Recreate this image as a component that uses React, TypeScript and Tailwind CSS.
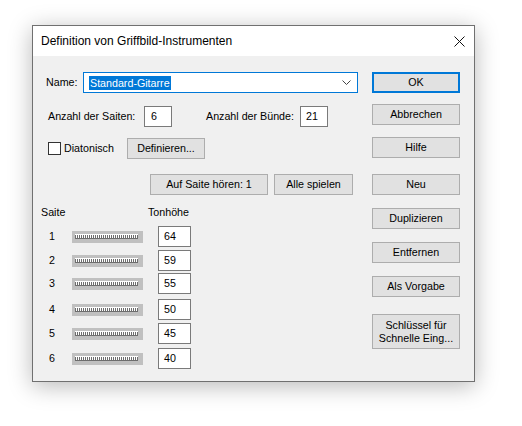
import React from "react";

const strings = [
  { n: 1, pitch: "64", gap: "mt-[7px]" },
  { n: 2, pitch: "59", gap: "mt-[3px]" },
  { n: 3, pitch: "55", gap: "mt-[2px]" },
  { n: 4, pitch: "50", gap: "mt-[5px]" },
  { n: 5, pitch: "45", gap: "mt-[3px]" },
  { n: 6, pitch: "40", gap: "mt-[4px]" },
];

function Btn({ children, className = "" }: { children: React.ReactNode; className?: string }) {
  return (
    <div
      className={`flex h-[21px] items-center justify-center border border-[#adadad] bg-[#e1e1e1] leading-[13px] ${className}`}
    >
      {children}
    </div>
  );
}

function Slider() {
  return (
    <div className="flex h-[12px] w-[71px] items-center bg-[#c0c0c0] px-[3px]">
      <svg width="63" height="5" viewBox="0 0 63 5" className="block">
        <defs>
          <pattern id="ticks" width="2" height="3" patternUnits="userSpaceOnUse">
            <rect width="2" height="3" fill="#ffffff" />
            <rect width="1" height="3" fill="#6d6d6d" />
          </pattern>
        </defs>
        <rect x="0" y="0" width="63" height="1" fill="#ffffff" />
        <rect x="0" y="1" width="63" height="3" fill="url(#ticks)" />
        <rect x="0" y="4" width="63" height="1" fill="#6d6d6d" />
      </svg>
    </div>
  );
}

export default function App() {
  return (
    <div
      className="min-h-[426px] w-[522px] bg-white pl-[32px] pt-[25px] text-[10.7px] text-black"
      style={{ fontFamily: '"Liberation Sans", Arial, sans-serif' }}
    >
      <div className="flex h-[357px] w-[443px] flex-col border border-[#707070] bg-[#f0f0f0] shadow-[0_4px_22px_rgba(0,0,0,0.28)]">
        {/* Title bar */}
        <div className="flex h-[30px] items-center justify-between bg-white pl-[8px] pr-[8px]">
          <span className="text-[12px]">Definition von Griffbild-Instrumenten</span>
          <svg width="11" height="11" viewBox="0 0 11 11" className="mr-[1px]">
            <path d="M0.5 0.5 L10.5 10.5 M10.5 0.5 L0.5 10.5" stroke="#111" strokeWidth="1" />
          </svg>
        </div>

        <div className="flex flex-1">
          {/* Left area */}
          <div className="flex w-[339px] flex-col">
            <div className="mt-[16px] flex h-[21px] items-center pl-[13px]">
              <span className="w-[37px]">Name:</span>
              <div className="flex h-[21px] w-[275px] items-center justify-between border border-[#0078d7] bg-white pl-[5px] pr-[6px]">
                <span className="bg-[#0078d7] px-[1px] leading-[14px] text-white">Standard-Gitarre</span>
                <svg width="9" height="5" viewBox="0 0 9 5">
                  <path d="M0.5 0.5 L4.5 4.5 L8.5 0.5" fill="none" stroke="#444" strokeWidth="1" />
                </svg>
              </div>
            </div>

            <div className="mt-[13px] flex h-[21px] items-center pl-[15px]">
              <span className="w-[96px]">Anzahl der Saiten:</span>
              <div className="flex h-[21px] w-[28px] items-center border border-[#7a7a7a] bg-white pl-[6px]">6</div>
              <span className="ml-[34px] w-[94px]">Anzahl der Bünde:</span>
              <div className="flex h-[21px] w-[28px] items-center border border-[#7a7a7a] bg-white pl-[5px]">21</div>
            </div>

            <div className="mt-[11px] flex h-[21px] items-center pl-[15px]">
              <div className="flex w-[79px] items-center">
                <div className="h-[13px] w-[13px] border border-[#333] bg-white" />
                <span className="ml-[3px]">Diatonisch</span>
              </div>
              <Btn className="w-[78px]">Definieren...</Btn>
            </div>

            <div className="mt-[15px] flex h-[21px] items-center pl-[117px]">
              <Btn className="w-[118px]">Auf Saite hören: 1</Btn>
              <Btn className="ml-[6px] w-[79px]">Alle spielen</Btn>
            </div>

            <div className="mt-[11px] flex h-[13px] items-center leading-[13px]">
              <span className="ml-[8px] w-[107px]">Saite</span>
              <span>Tonhöhe</span>
            </div>

            {strings.map((s) => (
              <div key={s.n} className={`${s.gap} flex h-[21px] items-center`}>
                <span className="ml-[16px] w-[23px]">{s.n}</span>
                <Slider />
                <div className="ml-[15px] flex h-[21px] w-[33px] items-center border border-[#7a7a7a] bg-white pl-[5px]">
                  {s.pitch}
                </div>
              </div>
            ))}
          </div>

          {/* Right buttons */}
          <div className="flex w-[88px] flex-col">
            <div className="mt-[16px] flex h-[21px] items-center justify-center border-2 border-[#0078d7] bg-[#e1e1e1]">
              OK
            </div>
            <Btn className="mt-[11px]">Abbrechen</Btn>
            <Btn className="mt-[12px]">Hilfe</Btn>
            <Btn className="mt-[16px]">Neu</Btn>
            <Btn className="mt-[13px]">Duplizieren</Btn>
            <Btn className="mt-[13px]">Entfernen</Btn>
            <Btn className="mt-[13px]">Als Vorgabe</Btn>
            <div className="mt-[17px] flex h-[35px] flex-col items-center justify-center border border-[#adadad] bg-[#e1e1e1] leading-[13px]">
              <span>Schlüssel für</span>
              <span>Schnelle Eing...</span>
            </div>
          </div>
        </div>
      </div>
    </div>
  );
}
